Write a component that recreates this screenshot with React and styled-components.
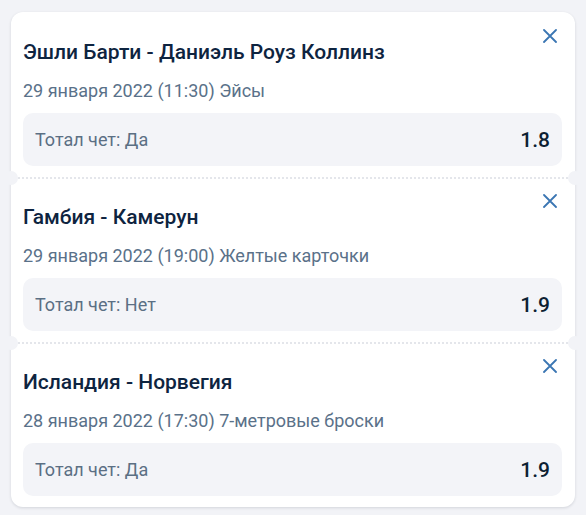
import React from 'react';
import styled, { createGlobalStyle } from 'styled-components';

const GlobalStyle = createGlobalStyle`
    body {
        margin: 0;
        background: #f2f3f7;
        font-family: Roboto, "Liberation Sans", sans-serif;
    }
`;

const Page = styled.div`
    padding: 12px 11px 5px 11px;
`;

const Card = styled.div`
    background: #fff;
    border-radius: 12px;
    box-shadow: 0 1px 3px rgba(20, 30, 50, 0.14);
`;

const Section = styled.div`
    position: relative;
    padding: 28px 13px 11px 12px;
    & + & {
        border-top: 2px dotted #e4e6eb;
        padding-top: 26px;
    }
    & + &::before,
    & + &::after {
        content: '';
        position: absolute;
        top: -8px;
        width: 14px;
        height: 14px;
        border-radius: 50%;
        background: #f2f3f7;
    }
    & + &::before {
        left: -7px;
    }
    & + &::after {
        right: -7px;
    }
`;

const Head = styled.div`
    display: flex;
    justify-content: space-between;
    align-items: flex-start;
`;

const Title = styled.div`
    font-size: 21px;
    line-height: 24px;
    font-weight: 500;
    color: #0e2440;
`;

const Close = styled.button`
    border: none;
    background: none;
    padding: 0;
    margin: -11px 5px 0 0;
    width: 14px;
    height: 14px;
    display: flex;
    cursor: pointer;
`;

const Info = styled.div`
    margin-top: 16px;
    font-size: 18px;
    line-height: 21px;
    color: #5a7189;
`;

const Odd = styled.div`
    margin-top: 12px;
    height: 53px;
    border-radius: 10px;
    background: #f3f4f8;
    display: flex;
    align-items: center;
    justify-content: space-between;
    padding: 0 12px;
`;

const Label = styled.span`
    font-size: 18px;
    color: #5b6f84;
`;

const Value = styled.span`
    font-size: 21px;
    font-weight: 500;
    color: #0d1f33;
`;

const CloseIcon = () => (
    <svg width="14" height="14" viewBox="0 0 14 14">
        <path d="M1 1 L13 13 M13 1 L1 13" stroke="#3b76b3" strokeWidth="1.8" strokeLinecap="round" fill="none" />
    </svg>
);

const bets = [
    { title: 'Эшли Барти - Даниэль Роуз Коллинз', info: '29 января 2022 (11:30) Эйсы', label: 'Тотал чет: Да', value: '1.8' },
    { title: 'Гамбия - Камерун', info: '29 января 2022 (19:00) Желтые карточки', label: 'Тотал чет: Нет', value: '1.9' },
    { title: 'Исландия - Норвегия', info: '28 января 2022 (17:30) 7-метровые броски', label: 'Тотал чет: Да', value: '1.9' },
];

const App = () => {
    return (
        <Page>
            <GlobalStyle />
            <Card>
                {bets.map((b, i) => (
                    <Section key={i}>
                        <Head>
                            <Title>{b.title}</Title>
                            <Close><CloseIcon /></Close>
                        </Head>
                        <Info>{b.info}</Info>
                        <Odd>
                            <Label>{b.label}</Label>
                            <Value>{b.value}</Value>
                        </Odd>
                    </Section>
                ))}
            </Card>
        </Page>
    );
}

export default App;
